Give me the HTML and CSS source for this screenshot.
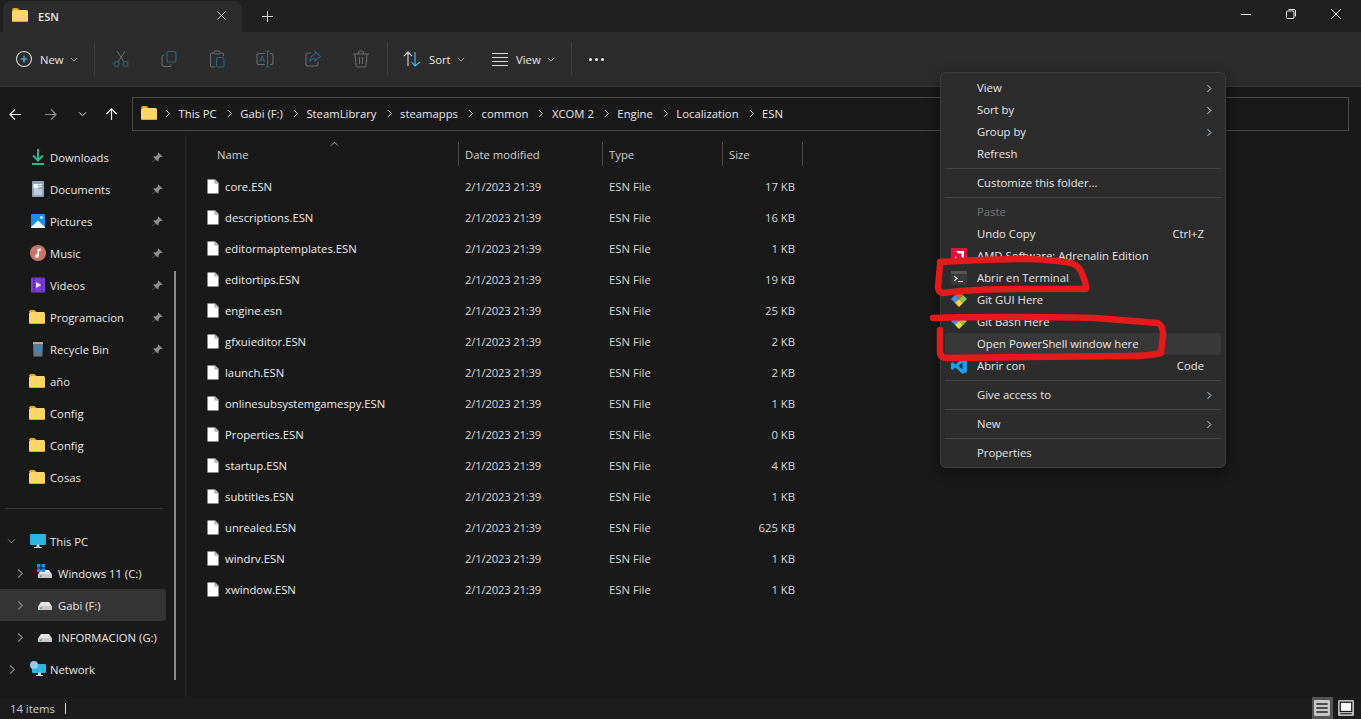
FILE: index.html
```html
<!DOCTYPE html>
<html lang="en">
<head>
  <meta charset="UTF-8" />
  <title>ESN</title>
  <link rel="stylesheet" href="styles.css">
</head>
<body>

<svg class="defs" width="0" height="0">
  <symbol id="folder" viewBox="0 0 16 14">
    <path d="M0 2q0-2 2-2h3.500l2 2H0z" fill="#e9a90f"/>
    <path d="M0 3.500q0-1.500 1.500-1.500H14.500q1.500 0 1.500 1.500V12.500q0 1.500-1.500 1.500H1.500Q0 14 0 12.500z" fill="#fcd669"/>
    <path d="M0 12.500V12.800Q0 14 1.500 14H14.500Q16 14 16 12.800V12.500Q16 13.300 14.500 13.300H1.500Q0 13.300 0 12.500z" fill="#d99a14"/>
  </symbol>
  <symbol id="file" viewBox="0 0 12 15">
    <path d="M.5 1.200Q.5.500 1.200.500H8L11.500 4V13.800Q11.500 14.500 10.800 14.500H1.200Q.5 14.500.5 13.800z" fill="#fff" stroke="#8b8b8b"/>
    <path d="M8 .5V4H11.500" fill="none" stroke="#8b8b8b"/>
  </symbol>
  <symbol id="pin" viewBox="0 0 12 12">
    <path d="M7 .5 11.500 5 10.500 5.700 9.300 5.300 7.200 7.500 7.300 9.500 6.300 10.300 4 8 1 11 .5 10.500 3.500 7.500 1.500 5.500 2.300 4.600 4.300 4.700 6.500 2.600 6.200 1.400z" fill="#8e8e8e"/>
  </symbol>
  <symbol id="drive" viewBox="0 0 14 8">
    <path d="M3 0H11L14 4.500H0z" fill="#e4e4e4"/>
    <path d="M0 4H14V8H0z" fill="#c8c8c8"/>
    <path d="M2 5.500H4V6.700H2z" fill="#3da44d"/>
  </symbol>
  <symbol id="chev-right" viewBox="0 0 8 12">
    <path d="M2 1.500 6.500 6 2 10.500" fill="none" stroke="currentColor" stroke-width="1.300"/>
  </symbol>
  <symbol id="chev-down" viewBox="0 0 10 6">
    <path d="M1 1 5 5 9 1" fill="none" stroke="currentColor" stroke-width="1.100"/>
  </symbol>
  <symbol id="git" viewBox="0 0 16 16">
    <path d="M8 -1 12 3 8 7 4 3z" fill="#e8503a"/>
    <path d="M4 3 8 7 4 11 0 7z" fill="#4a90e2"/>
    <path d="M12 3 16 7 12 11 8 7z" fill="#8cc84b"/>
    <path d="M8 7 12 11 8 15 4 11z" fill="#f5d442"/>
  </symbol>
</svg>

<div class="titlebar">
  <div class="tab">
    <svg class="tab-folder"><use href="#folder"/></svg>
    <span class="tab-name">ESN</span>
    <svg class="tab-close" viewBox="0 0 10 10"><path d="M.5.500 9.500 9.500M9.500.500 .5 9.500"/></svg>
  </div>
  <svg class="tab-add" viewBox="0 0 11 11"><path d="M5.500 0V11M0 5.500H11"/></svg>
  <div class="window-btns">
    <svg viewBox="0 0 10 10"><path d="M0 5.500H10"/></svg>
    <svg viewBox="0 0 10 10"><rect x=".5" y="2" width="7.500" height="7.500" rx="1"/><path d="M2.500.500H8Q9.500.500 9.500 2V7.500"/></svg>
    <svg viewBox="0 0 10 10"><path d="M0 0 10 10M10 0 0 10"/></svg>
  </div>
</div>

<div class="toolbar">
  <div class="tool tool-new">
    <svg class="ico" viewBox="0 0 18 18"><circle cx="9" cy="9" r="7.500" fill="none" stroke="#d8d8d8" stroke-width="1.100"/><path d="M9 5.500V12.500M5.500 9H12.500" stroke="#4cc2ff" stroke-width="1.200"/></svg>
    <span>New</span>
    <svg class="chev"><use href="#chev-down"/></svg>
  </div>
  <div class="tool-sep"></div>
  <div class="tool-group">
    <svg class="ico dim" viewBox="0 0 18 18"><path d="M5 1 12 12M13 1 6 12" fill="none" stroke="#6b6b6b"/><circle cx="4.500" cy="14" r="2.500" fill="none" stroke="#2f6384" stroke-width="1.100"/><circle cx="13.500" cy="14" r="2.500" fill="none" stroke="#2f6384" stroke-width="1.100"/></svg>
    <svg class="ico dim" viewBox="0 0 18 18"><rect x="7" y="1.500" width="9" height="10.500" rx="2" fill="none" stroke="#2f6384" stroke-width="1.100"/><path d="M4.500 5H4Q2 5 2 7V14Q2 16.500 4.500 16.500H9Q11 16.500 11 14.500" fill="none" stroke="#6b6b6b" stroke-width="1.100"/></svg>
    <svg class="ico dim" viewBox="0 0 18 18"><path d="M6 3H4Q2.500 3 2.500 4.500V15.500Q2.500 17 4 17H7M12 3H14Q15.500 3 15.500 4.500V6" fill="none" stroke="#6b6b6b" stroke-width="1.100"/><rect x="6" y="1" width="6" height="3" rx="1" fill="none" stroke="#6b6b6b"/><rect x="8.500" y="7.500" width="7.500" height="9.500" rx="1.500" fill="none" stroke="#2f6384" stroke-width="1.100"/></svg>
    <svg class="ico dim" viewBox="0 0 18 18"><path d="M9 3.500H3Q1 3.500 1 5.500V12.500Q1 14.500 3 14.500H9M14 3.500H15Q17 3.500 17 5.500V12.500Q17 14.500 15 14.500H14" fill="none" stroke="#6b6b6b" stroke-width="1.100"/><path d="M11.500 1V17M9.500 1H13.500M9.500 17H13.500" fill="none" stroke="#2f6384" stroke-width="1.100"/><path d="M3.500 12 6 6 8.500 12M4.300 10H7.700" fill="none" stroke="#2f6384"/></svg>
    <svg class="ico dim" viewBox="0 0 18 18"><path d="M7 3H4Q2 3 2 5V14Q2 16 4 16H12Q14 16 14 14V12" fill="none" stroke="#6b6b6b" stroke-width="1.100"/><path d="M11 1.500 16.500 6.500 11 11V8.500Q7.500 8.500 6 12 6 5 11 4.500z" fill="none" stroke="#2f6384" stroke-width="1.100"/></svg>
    <svg class="ico dim" viewBox="0 0 18 18"><path d="M1 4H17M6.500 4V2.500Q6.500 1 8 1H10Q11.500 1 11.500 2.500V4M3 4 4 15.500Q4.200 17 5.500 17H12.500Q13.800 17 14 15.500L15 4M7.500 7V14M10.500 7V14" fill="none" stroke="#6b6b6b" stroke-width="1.100"/></svg>
  </div>
  <div class="tool-sep"></div>
  <div class="tool tool-sort">
    <svg class="ico" viewBox="0 0 18 18"><path d="M5 16V2M1 6 5 2 9 6" fill="none" stroke="#d8d8d8" stroke-width="1.100"/><path d="M12 2V16M8.500 12 12 16 17 12" fill="none" stroke="#4cc2ff" stroke-width="1.100"/></svg>
    <span>Sort</span>
    <svg class="chev"><use href="#chev-down"/></svg>
  </div>
  <div class="tool tool-view">
    <svg class="ico" viewBox="0 0 18 18"><path d="M1 3.500H17M1 7.500H17M1 11.500H17M1 15.500H17" stroke="#d8d8d8" stroke-width="1.100"/></svg>
    <span>View</span>
    <svg class="chev"><use href="#chev-down"/></svg>
  </div>
  <div class="tool-sep"></div>
  <div class="dots"><i></i><i></i><i></i></div>
</div>

<div class="addressbar">
  <svg class="nav nav-back" viewBox="0 0 14 14"><path d="M13 7H1M6.500 1.500 1 7 6.500 12.500"/></svg>
  <svg class="nav nav-fwd" viewBox="0 0 14 14"><path d="M1 7H13M7.500 1.500 13 7 7.500 12.500"/></svg>
  <svg class="nav-recent"><use href="#chev-down"/></svg>
  <svg class="nav nav-up" viewBox="0 0 14 14"><path d="M7 13V1M1.500 6.500 7 1 12.500 6.500"/></svg>
  <div class="crumbs">
    <svg class="crumb-folder"><use href="#folder"/></svg>
    <svg class="crumb-sep"><use href="#chev-right"/></svg><span>This PC</span>
    <svg class="crumb-sep"><use href="#chev-right"/></svg><span>Gabi (F:)</span>
    <svg class="crumb-sep"><use href="#chev-right"/></svg><span>SteamLibrary</span>
    <svg class="crumb-sep"><use href="#chev-right"/></svg><span>steamapps</span>
    <svg class="crumb-sep"><use href="#chev-right"/></svg><span>common</span>
    <svg class="crumb-sep"><use href="#chev-right"/></svg><span>XCOM 2</span>
    <svg class="crumb-sep"><use href="#chev-right"/></svg><span>Engine</span>
    <svg class="crumb-sep"><use href="#chev-right"/></svg><span>Localization</span>
    <svg class="crumb-sep"><use href="#chev-right"/></svg><span>ESN</span>
  </div>
</div>

<div class="body">
  <div class="sidebar">
    <div class="side-row">
      <svg class="side-ico" viewBox="0 0 18 18"><path d="M9 1V12M4 7.500 9 12.500 14 7.500" fill="none" stroke="#2ab98a" stroke-width="2"/><path d="M3 16H15" stroke="#2ab98a" stroke-width="2"/></svg>
      <span>Downloads</span><svg class="pin"><use href="#pin"/></svg>
    </div>
    <div class="side-row">
      <svg class="side-ico" viewBox="0 0 18 18"><rect x="3" y="1" width="12" height="16" rx="1" fill="#8fa6bf"/><path d="M5 4.500H9V8H5zM10 4.500H13M10 6.500H13M5 10H13M5 12H13M5 14H13" fill="#fff" stroke="#fff" stroke-width=".9"/></svg>
      <span>Documents</span><svg class="pin"><use href="#pin"/></svg>
    </div>
    <div class="side-row">
      <svg class="side-ico" viewBox="0 0 18 18"><rect x="2" y="2" width="14" height="14" rx="1" fill="#1a8fe3"/><path d="M2 15 9 8.500 16 15V16H2z" fill="#eaf6ff"/><circle cx="12.500" cy="5.500" r="1.300" fill="#fff"/></svg>
      <span>Pictures</span><svg class="pin"><use href="#pin"/></svg>
    </div>
    <div class="side-row">
      <svg class="side-ico" viewBox="0 0 18 18"><circle cx="9" cy="9" r="8" fill="#c8756a"/><path d="M8.500 11V5L12 4.500V6.500L10 7V11.500" fill="#fff"/><circle cx="8" cy="12" r="1.800" fill="#fff"/></svg>
      <span>Music</span><svg class="pin"><use href="#pin"/></svg>
    </div>
    <div class="side-row">
      <svg class="side-ico" viewBox="0 0 18 18"><rect x="2" y="1.500" width="14" height="15" rx="1" fill="#7b3fd1"/><path d="M5 2V16M13 2V16" stroke="#4a1f9a" stroke-width="1.500" stroke-dasharray="1.500 1.500"/><path d="M7 6 12.500 9 7 12z" fill="#e8ddff"/></svg>
      <span>Videos</span><svg class="pin"><use href="#pin"/></svg>
    </div>
    <div class="side-row">
      <svg class="side-folder"><use href="#folder"/></svg>
      <span>Programacion</span><svg class="pin"><use href="#pin"/></svg>
    </div>
    <div class="side-row">
      <svg class="side-ico" viewBox="0 0 18 18"><path d="M4 2H14L13.500 16.500H4.500z" fill="#6d7780"/><rect x="4" y="2" width="10" height="2" fill="#a5adb4"/><circle cx="9" cy="9" r="2.500" fill="none" stroke="#2a8fe0" stroke-width="1.500"/></svg>
      <span>Recycle Bin</span><svg class="pin"><use href="#pin"/></svg>
    </div>
    <div class="side-row"><svg class="side-folder"><use href="#folder"/></svg><span>año</span></div>
    <div class="side-row"><svg class="side-folder"><use href="#folder"/></svg><span>Config</span></div>
    <div class="side-row"><svg class="side-folder"><use href="#folder"/></svg><span>Config</span></div>
    <div class="side-row"><svg class="side-folder"><use href="#folder"/></svg><span>Cosas</span></div>

    <div class="side-divider"></div>

    <div class="side-row">
      <svg class="expander exp-open"><use href="#chev-down"/></svg>
      <svg class="side-ico" viewBox="0 0 18 18"><rect x="1" y="2" width="16" height="11" rx="1" fill="#2cb5e0"/><path d="M8 13H10V15H8zM5 15.500H13" fill="#cfd8dc" stroke="#cfd8dc"/></svg>
      <span>This PC</span>
    </div>
    <div class="side-row sub">
      <svg class="expander"><use href="#chev-right"/></svg>
      <svg class="drive-win" viewBox="0 0 8 8"><path d="M0 0H3.500V3.500H0zM4.500 0H8V3.500H4.500zM0 4.500H3.500V8H0zM4.500 4.500H8V8H4.500z" fill="#1f8fe8"/></svg>
      <svg class="drive"><use href="#drive"/></svg>
      <span>Windows 11 (C:)</span>
    </div>
    <div class="side-row sub selected">
      <svg class="expander"><use href="#chev-right"/></svg>
      <svg class="drive"><use href="#drive"/></svg>
      <span>Gabi (F:)</span>
    </div>
    <div class="side-row sub">
      <svg class="expander"><use href="#chev-right"/></svg>
      <svg class="drive"><use href="#drive"/></svg>
      <span>INFORMACION (G:)</span>
    </div>
    <div class="side-row">
      <svg class="expander"><use href="#chev-right"/></svg>
      <svg class="side-ico" viewBox="0 0 18 18"><rect x="3" y="4" width="14" height="9" rx="1" fill="#2cb5e0"/><path d="M9.500 13H11.500V15H9.500zM7 15.500H14" fill="#cfd8dc" stroke="#cfd8dc"/><circle cx="5" cy="5" r="4" fill="#9fc5e8"/></svg>
      <span>Network</span>
    </div>
    <div class="scroll-thumb"></div>
  </div>

  <div class="files">
    <div class="file-head">
      <div class="col col-name">Name<svg class="sort-arrow" viewBox="0 0 10 6"><path d="M1 5 5 1 9 5"/></svg></div>
      <div class="col">Date modified</div>
      <div class="col">Type</div>
      <div class="col">Size</div>
    </div>
    <div class="file-row"><div class="name"><svg class="file-ico"><use href="#file"/></svg>core.ESN</div><div class="date">2/1/2023 21:39</div><div>ESN File</div><div class="size">17 KB</div></div>
    <div class="file-row"><div class="name"><svg class="file-ico"><use href="#file"/></svg>descriptions.ESN</div><div class="date">2/1/2023 21:39</div><div>ESN File</div><div class="size">16 KB</div></div>
    <div class="file-row"><div class="name"><svg class="file-ico"><use href="#file"/></svg>editormaptemplates.ESN</div><div class="date">2/1/2023 21:39</div><div>ESN File</div><div class="size">1 KB</div></div>
    <div class="file-row"><div class="name"><svg class="file-ico"><use href="#file"/></svg>editortips.ESN</div><div class="date">2/1/2023 21:39</div><div>ESN File</div><div class="size">19 KB</div></div>
    <div class="file-row"><div class="name"><svg class="file-ico"><use href="#file"/></svg>engine.esn</div><div class="date">2/1/2023 21:39</div><div>ESN File</div><div class="size">25 KB</div></div>
    <div class="file-row"><div class="name"><svg class="file-ico"><use href="#file"/></svg>gfxuieditor.ESN</div><div class="date">2/1/2023 21:39</div><div>ESN File</div><div class="size">2 KB</div></div>
    <div class="file-row"><div class="name"><svg class="file-ico"><use href="#file"/></svg>launch.ESN</div><div class="date">2/1/2023 21:39</div><div>ESN File</div><div class="size">2 KB</div></div>
    <div class="file-row"><div class="name"><svg class="file-ico"><use href="#file"/></svg>onlinesubsystemgamespy.ESN</div><div class="date">2/1/2023 21:39</div><div>ESN File</div><div class="size">1 KB</div></div>
    <div class="file-row"><div class="name"><svg class="file-ico"><use href="#file"/></svg>Properties.ESN</div><div class="date">2/1/2023 21:39</div><div>ESN File</div><div class="size">0 KB</div></div>
    <div class="file-row"><div class="name"><svg class="file-ico"><use href="#file"/></svg>startup.ESN</div><div class="date">2/1/2023 21:39</div><div>ESN File</div><div class="size">4 KB</div></div>
    <div class="file-row"><div class="name"><svg class="file-ico"><use href="#file"/></svg>subtitles.ESN</div><div class="date">2/1/2023 21:39</div><div>ESN File</div><div class="size">1 KB</div></div>
    <div class="file-row"><div class="name"><svg class="file-ico"><use href="#file"/></svg>unrealed.ESN</div><div class="date">2/1/2023 21:39</div><div>ESN File</div><div class="size">625 KB</div></div>
    <div class="file-row"><div class="name"><svg class="file-ico"><use href="#file"/></svg>windrv.ESN</div><div class="date">2/1/2023 21:39</div><div>ESN File</div><div class="size">1 KB</div></div>
    <div class="file-row"><div class="name"><svg class="file-ico"><use href="#file"/></svg>xwindow.ESN</div><div class="date">2/1/2023 21:39</div><div>ESN File</div><div class="size">1 KB</div></div>
  </div>
</div>

<div class="statusbar">
  <span>14 items</span><span class="status-sep"></span>
  <div class="view-btns">
    <div class="view-btn active"><svg viewBox="0 0 14 14"><rect width="14" height="14" rx="1" fill="#c8c8c8"/><path d="M2 3.500H12M2 7H12M2 10.500H12" stroke="#222" stroke-width="1.200"/></svg></div>
    <div class="view-btn"><svg viewBox="0 0 14 14"><rect width="14" height="14" rx="1" fill="#bbb"/><rect x="2" y="2" width="10" height="8" fill="#fff" stroke="#111"/><path d="M2 12H12" stroke="#222"/></svg></div>
  </div>
</div>

<div class="menu">
  <div class="menu-item">View<svg class="menu-arrow"><use href="#chev-right"/></svg></div>
  <div class="menu-item">Sort by<svg class="menu-arrow"><use href="#chev-right"/></svg></div>
  <div class="menu-item">Group by<svg class="menu-arrow"><use href="#chev-right"/></svg></div>
  <div class="menu-item">Refresh</div>
  <div class="menu-sep"></div>
  <div class="menu-item">Customize this folder...</div>
  <div class="menu-sep"></div>
  <div class="menu-item disabled">Paste</div>
  <div class="menu-item">Undo Copy<span class="shortcut">Ctrl+Z</span></div>
  <div class="menu-item">
    <svg class="menu-ico" viewBox="0 0 16 16"><rect width="16" height="16" fill="#e0103c"/><path d="M5 3H13V11L10.500 8.500V5.500H7.500zM4 12V8L8 12z" fill="#fff"/></svg>
    AMD Software: Adrenalin Edition
  </div>
  <div class="menu-item">
    <svg class="menu-ico" viewBox="0 0 16 16"><rect y="1" width="16" height="14" rx="1" fill="#3a3a3a"/><rect y="1" width="16" height="3" fill="#555"/><path d="M3 6 6 8.500 3 11M7 11.500H12" fill="none" stroke="#e8e8e8" stroke-width="1.200"/></svg>
    Abrir en Terminal
  </div>
  <div class="menu-item">
    <svg class="menu-ico"><use href="#git"/></svg>
    Git GUI Here
  </div>
  <div class="menu-item">
    <svg class="menu-ico"><use href="#git"/></svg>
    Git Bash Here
  </div>
  <div class="menu-item hover">Open PowerShell window here</div>
  <div class="menu-item">
    <svg class="menu-ico" viewBox="0 0 16 16"><path d="M11.500 0 16 2V14L11.500 16 4.500 9.500 1.500 12 0 11V5L1.500 4 4.500 6.500zM11.500 4.500 7.500 8 11.500 11.500z" fill="#1f9cf0"/></svg>
    Abrir con<span class="shortcut">Code</span>
  </div>
  <div class="menu-sep"></div>
  <div class="menu-item">Give access to<svg class="menu-arrow"><use href="#chev-right"/></svg></div>
  <div class="menu-sep"></div>
  <div class="menu-item">New<svg class="menu-arrow"><use href="#chev-right"/></svg></div>
  <div class="menu-sep"></div>
  <div class="menu-item">Properties</div>
</div>

<!-- red marker on top of the screenshot -->
<svg class="scribble" viewBox="0 0 1361 719">
  <path d="M940 262Q985 259 1028 259Q1055 260 1071 263Q1080 266 1083 276Q1087 286 1086 289L1028 289Q985 289 961 291L943 293Q938 292 938 287L940 265"/>
  <path d="M933 318Q990 316 1095 318L1158 323Q1163 326 1163 335L1161 353Q1150 356 1128 356L1028 357L948 358Q940 358 940 352L940 330"/>
</svg>

</body>
</html>
```

FILE: styles.css
```css
* {
  box-sizing: border-box;
}
html, body {
  height: 100%;
}
body {
  margin: 0;
  width: 1361px;
  height: 719px;
  overflow: hidden;
  position: relative;
  display: flex;
  flex-direction: column;
  background: #191919;
  color: #e8e8e8;
  font-family: "Open Sans", "Noto Sans", sans-serif;
  font-size: 11.3px;
}
svg {
  display: block;
  flex: none;
}
.defs {
  position: absolute;
}

/* title bar */
.titlebar {
  height: 32px;
  flex: none;
  background: #202020;
  display: flex;
  align-items: flex-end;
  padding-left: 3px;
}
.tab {
  width: 239px;
  height: 31px;
  background: #2c2c2c;
  border-radius: 8px 8px 0 0;
  display: flex;
  align-items: center;
  padding-left: 9px;
}
.tab-folder {
  width: 16px;
  height: 14px;
  margin-top: -3px;
}
.tab-name {
  margin-left: 10px;
  font-weight: 600;
  font-size: 11px;
  margin-top: -1px;
}
.tab-close {
  width: 9px;
  height: 9px;
  margin-left: auto;
  margin-right: 16px;
  margin-top: -3px;
  stroke: #ddd;
  fill: none;
}
.tab-add {
  width: 11px;
  height: 11px;
  margin-left: 20px;
  margin-bottom: 10px;
  stroke: #ddd;
  fill: none;
}
.window-btns {
  margin-left: auto;
  display: flex;
  align-items: center;
  align-self: flex-start;
  height: 28px;
  gap: 35px;
  padding-right: 20px;
}
.window-btns svg {
  width: 10px;
  height: 10px;
  stroke: #e6e6e6;
  fill: none;
}

/* toolbar */
.toolbar {
  height: 55px;
  flex: none;
  background: #2c2c2c;
  border-bottom: 1px solid #3a3a3a;
  display: flex;
  align-items: center;
}
.ico {
  width: 18px;
  height: 18px;
}
.tool {
  display: flex;
  align-items: center;
}
.tool-new {
  padding-left: 15px;
  width: 94px;
}
.tool-new span {
  margin-left: 7px;
}
.chev {
  width: 8px;
  height: 5px;
  margin-left: 6px;
  color: #bbb;
}
.tool-sep {
  width: 1px;
  height: 32px;
  background: #3f3f3f;
}
.tool-group {
  width: 292px;
  display: flex;
  gap: 30px;
  padding-left: 17px;
}
.tool-sort {
  margin-left: 15px;
  width: 88px;
}
.tool-sort span {
  margin-left: 8px;
}
.tool-view span {
  margin-left: 7px;
}
.tool-view {
  width: 80px;
}
.dots {
  display: flex;
  gap: 3px;
  margin-left: 17px;
}
.dots i {
  width: 3px;
  height: 3px;
  border-radius: 50%;
  background: #eee;
}

/* address row */
.addressbar {
  height: 48px;
  flex: none;
  display: flex;
  align-items: flex-start;
  padding-top: 10px;
}
.nav {
  width: 13px;
  height: 13px;
  margin-top: 11px;
  stroke: #eee;
  stroke-width: 1.300;
  fill: none;
}
.nav-back {
  margin-left: 9px;
}
.nav-fwd {
  margin-left: 22px;
  stroke: #8a8a8a;
}
.nav-recent {
  width: 9px;
  height: 6px;
  margin: 14px 0 0 21px;
  color: #ddd;
}
.nav-up {
  margin-left: 18px;
}
.crumbs {
  margin-left: 14px;
  width: 1217px;
  height: 34px;
  border: 1px solid #4a4a4a;
  display: flex;
  align-items: center;
  padding-left: 8px;
  padding-bottom: 2px;
  gap: 5px;
}
.crumb-folder {
  width: 16px;
  height: 14px;
  margin-right: -2px;
}
.crumb-sep {
  width: 7px;
  height: 9px;
  color: #ddd;
  margin: 0 2.500px 0 4px;
}

/* main area */
.body {
  flex: 1;
  display: flex;
  min-height: 0;
}
.sidebar {
  width: 186px;
  flex: none;
  position: relative;
  padding-top: 6px;
  border-right: 1px solid #262626;
}
.side-row {
  width: 166px;
  height: 32px;
  display: flex;
  align-items: center;
  padding-left: 29px;
  position: relative;
  border-radius: 0 3px 3px 0;
  white-space: nowrap;
}
.side-row span {
  margin-left: 3px;
}
.side-ico {
  width: 18px;
  height: 18px;
}
.side-folder {
  width: 16px;
  height: 14px;
  margin-right: 2px;
}
.pin {
  width: 11px;
  height: 11px;
  position: absolute;
  left: 152px;
  top: 11px;
}
.side-divider {
  width: 158px;
  height: 32px;
  margin-left: 5px;
  background: linear-gradient(#3a3a3a, #3a3a3a) 0 15px / 100% 1px no-repeat;
}
.expander {
  position: absolute;
  left: 8px;
  top: 11px;
  width: 8px;
  height: 11px;
  color: #8a8a8a;
}
.exp-open {
  left: 7px;
  top: 13px;
  width: 9px;
  height: 6px;
}
.sub {
  padding-left: 38px;
}
.sub .expander {
  left: 16px;
}
.sub span {
  margin-left: 6px;
}
.drive {
  width: 14px;
  height: 8px;
  margin-top: 2px;
}
.drive-win {
  position: absolute;
  left: 37px;
  top: 7px;
  width: 8px;
  height: 8px;
}
.selected {
  background: #343434;
}
.scroll-thumb {
  position: absolute;
  left: 174px;
  top: 136px;
  width: 2px;
  height: 409px;
  background: #8a8a8a;
}

/* file list */
.files {
  padding-left: 15px;
  padding-top: 7px;
  flex: 1;
}
.file-head, .file-row {
  display: grid;
  grid-template-columns: 258px 144px 120px 80px;
}
.file-row {
  grid-template-columns: 257px 144px 120px 80px;
}
.file-head {
  height: 24px;
  align-items: stretch;
  margin-bottom: 5px;
  color: #d0d0d0;
}
.col {
  display: flex;
  align-items: center;
  padding-left: 6px;
  border-right: 1px solid #4a4a4a;
  position: relative;
}
.col-name {
  padding-left: 16px;
}
.sort-arrow {
  position: absolute;
  left: 129px;
  top: -1px;
  width: 9px;
  height: 6px;
  stroke: #aaa;
  fill: none;
}
.file-row {
  height: 31px;
  align-items: center;
  color: #d8d8d8;
}
.file-row > div {
  padding-left: 7px;
  white-space: nowrap;
}
.file-row .name {
  display: flex;
  align-items: center;
  padding-left: 6px;
  color: #ececec;
}
.file-ico {
  width: 12px;
  height: 15px;
  margin-right: 6px;
}
.file-row .date {
  letter-spacing: -0.2px;
}
.size {
  text-align: right;
  padding-right: 7px;
}

/* status bar */
.statusbar {
  height: 22px;
  flex: none;
  background: #1c1c1c;
  display: flex;
  align-items: center;
  padding-left: 10px;
  color: #ccc;
}
.status-sep {
  width: 1px;
  height: 11px;
  margin-left: 10px;
  background: #ddd;
}
.view-btns {
  margin-left: auto;
  display: flex;
  align-items: flex-start;
  align-self: stretch;
  padding-right: 4px;
  gap: 3px;
}
.view-btn {
  width: 21px;
  height: 22px;
  padding: 3px 2px;
}
.view-btn svg {
  width: 16px;
  height: 16px;
}
.view-btn.active {
  background: #555;
}

/* context menu */
.menu {
  position: absolute;
  left: 940px;
  top: 72px;
  width: 286px;
  padding: 4px 4px 3px;
  background: #2c2c2c;
  border: 1px solid #3f3f3f;
  border-radius: 6px;
  box-shadow: 0 4px 14px rgba(0,0,0,0.45);
}
.menu-item {
  height: 22px;
  display: flex;
  align-items: center;
  padding-left: 32px;
  padding-bottom: 2px;
  position: relative;
  border-radius: 3px;
  color: #e8e8e8;
}
.menu-item.disabled {
  color: #777;
}
.menu-item.hover {
  background: #383838;
}
.menu-sep {
  height: 1px;
  margin: 3px 0;
  background: #444;
}
.menu-arrow {
  position: absolute;
  right: 9px;
  top: 7px;
  width: 6px;
  height: 9px;
  color: #cfe6f5;
}
.shortcut {
  margin-left: auto;
  margin-right: 17px;
}
.menu-ico {
  position: absolute;
  left: 6px;
  top: 3px;
  width: 16px;
  height: 16px;
}
.scribble {
  position: absolute;
  left: 0;
  top: 0;
  width: 1361px;
  height: 719px;
  fill: none;
  stroke: #e21b1b;
  stroke-width: 6.500;
  stroke-linecap: round;
  stroke-linejoin: round;
  pointer-events: none;
}
```
